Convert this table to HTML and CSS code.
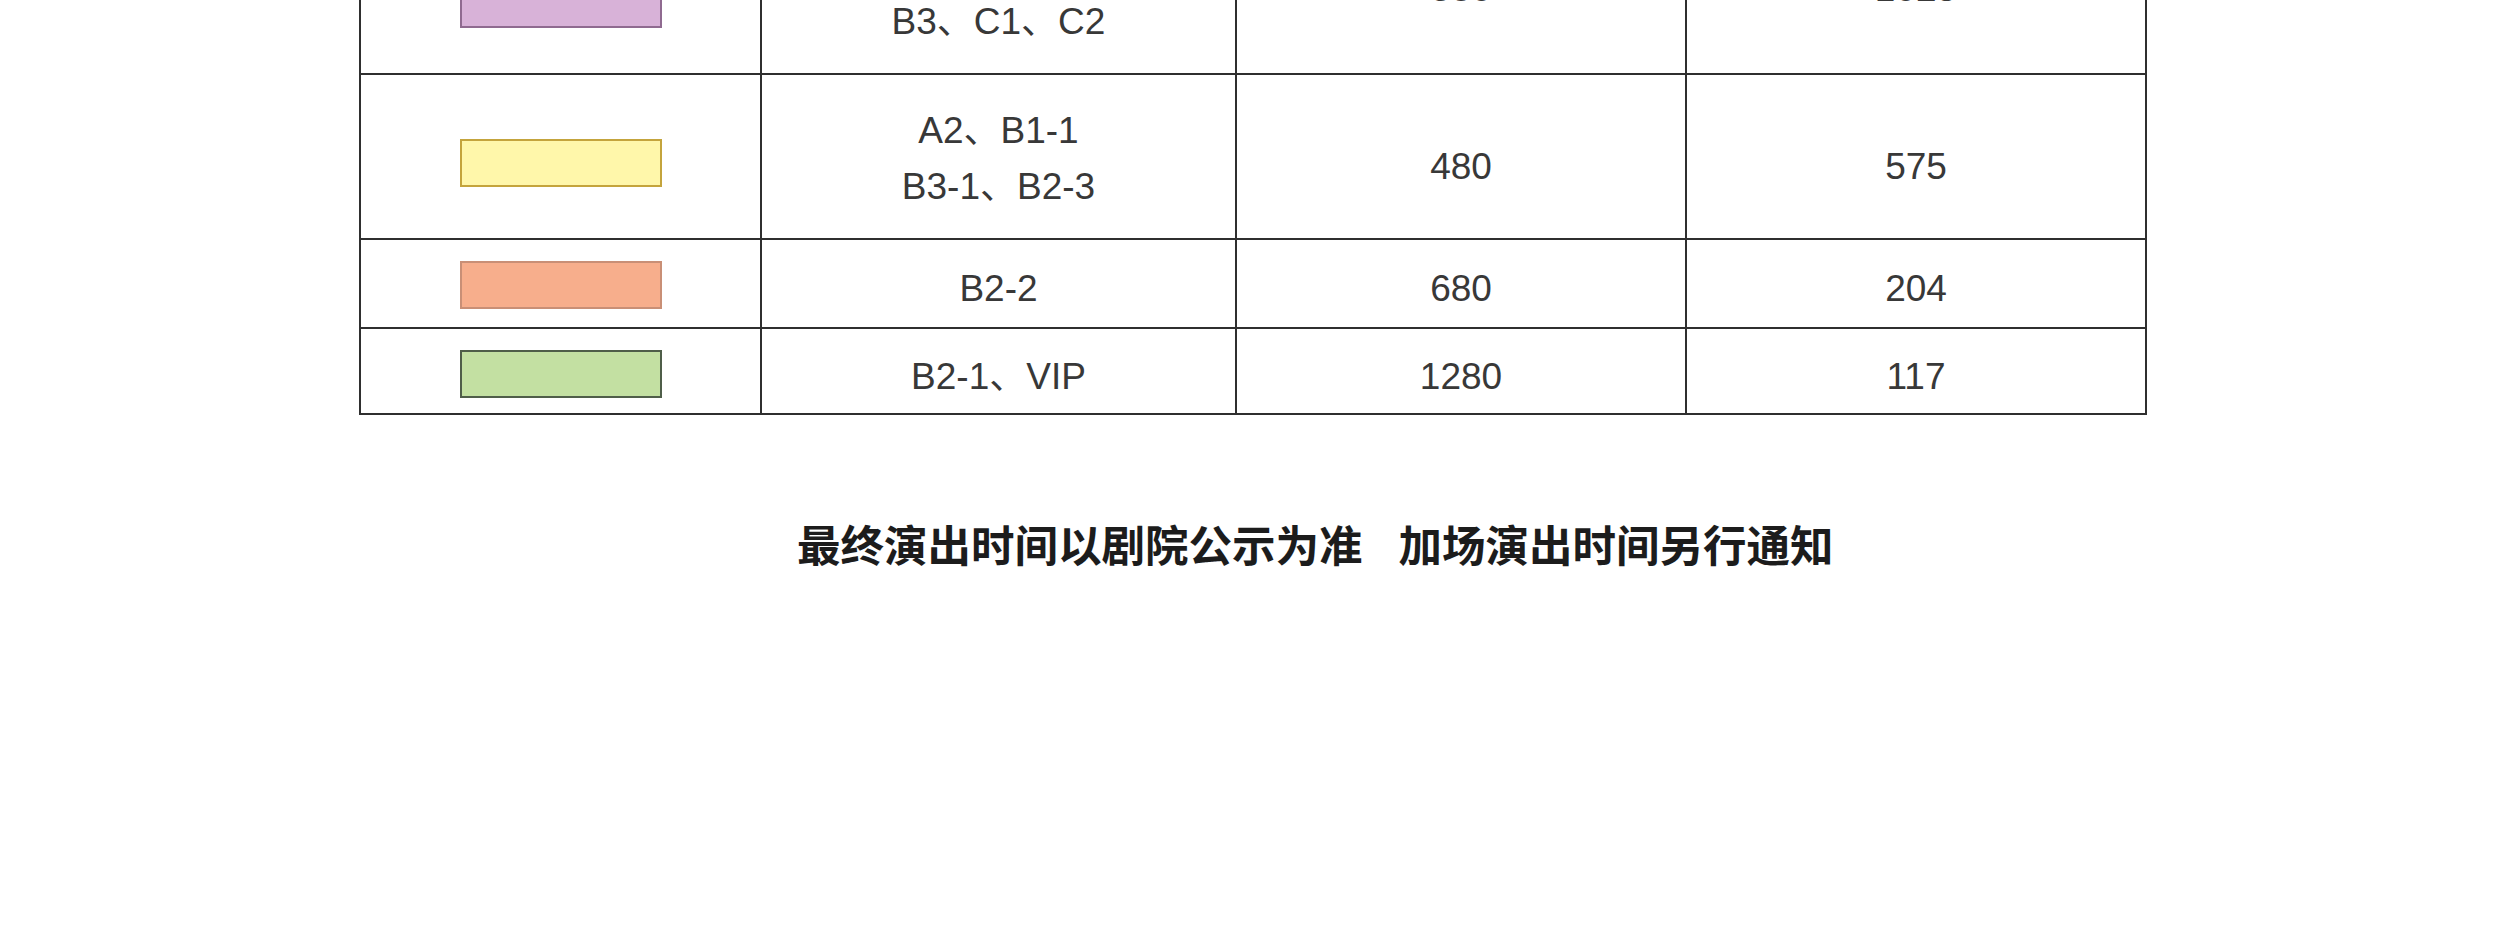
FILE: index.html
```html
<!DOCTYPE html>
<html lang="zh-CN">
<head>
<meta charset="utf-8">
<title>票价</title>
<link rel="stylesheet" href="styles.css">
</head>
<body>
<div class="page">
  <table class="prices">
    <colgroup>
      <col class="c1"><col class="c2"><col class="c3"><col class="c4">
    </colgroup>
    <tbody>
      <tr class="tall first">
        <td><span class="swatch purple"></span></td>
        <td><div class="zones"><span>A1、B1、B2</span><span>B3、C1、C2</span></div></td>
        <td><div class="val up">380</div></td>
        <td><div class="val up">1025</div></td>
      </tr>
      <tr class="tall">
        <td><span class="swatch yellow"></span></td>
        <td><div class="zones"><span>A2、B1-1</span><span>B3-1、B2-3</span></div></td>
        <td><div class="val low">480</div></td>
        <td><div class="val low">575</div></td>
      </tr>
      <tr class="mid">
        <td><span class="swatch orange"></span></td>
        <td><div class="val">B2-2</div></td>
        <td><div class="val">680</div></td>
        <td><div class="val">204</div></td>
      </tr>
      <tr class="short">
        <td><span class="swatch green"></span></td>
        <td><div class="val">B2-1、VIP</div></td>
        <td><div class="val">1280</div></td>
        <td><div class="val">117</div></td>
      </tr>
    </tbody>
  </table>
  <p class="notice"><span>最终演出时间以剧院公示为准</span><span>加场演出时间另行通知</span></p>
</div>
</body>
</html>
```

FILE: styles.css
```css
html, body {
  margin: 0;
  padding: 0;
  background: #ffffff;
}

.page {
  width: 2500px;
  height: 946px;
  overflow: hidden;
}

.prices {
  margin-top: -92px;
  margin-left: 359px;
  border-collapse: collapse;
  table-layout: fixed;
  width: 1786px;
  font-family: "Liberation Sans", Arial, "Noto Sans CJK SC", sans-serif;
  font-size: 37px;
  color: #383838;
}

.c1 { width: 401px; }
.c2 { width: 475px; }
.c3 { width: 450px; }
.c4 { width: 460px; }

.prices td {
  border: 2px solid #2f2f2f;
  text-align: center;
  vertical-align: middle;
  padding: 0;
  line-height: 56px;
}

.prices tr.tall td { height: 163px; }
.prices tr.mid td { height: 87px; }
.prices tr.short td { height: 84px; }

.val { padding-top: 11px; }
.val.low { padding-top: 20px; }
.val.up { padding-top: 0; padding-bottom: 6px; }

.zones {
  display: flex;
  flex-direction: column;
  align-items: center;
  padding: 11px 0 7px;
}

.swatch {
  display: block;
  width: 198px;
  height: 44px;
  margin: 2px auto 0;
  border: 2px solid;
  box-sizing: content-box;
}

.purple { background: #d8b2d8; border-color: #8f6a90; margin-top: 24px; }
.yellow { background: #fff7aa; border-color: #c4a43c; margin-top: 12px; }
.orange { background: #f7ae8c; border-color: #c98f76; }
.green  { background: #c3e0a2; border-color: #4f5e49; margin-top: 5px; }

.notice {
  margin: 107px 0 0 797px;
  display: flex;
  gap: 36px;
  font-family: "Noto Sans CJK SC", sans-serif;
  font-weight: 700;
  font-size: 43.5px;
  line-height: 1;
  color: #1c1c1c;
}
```
